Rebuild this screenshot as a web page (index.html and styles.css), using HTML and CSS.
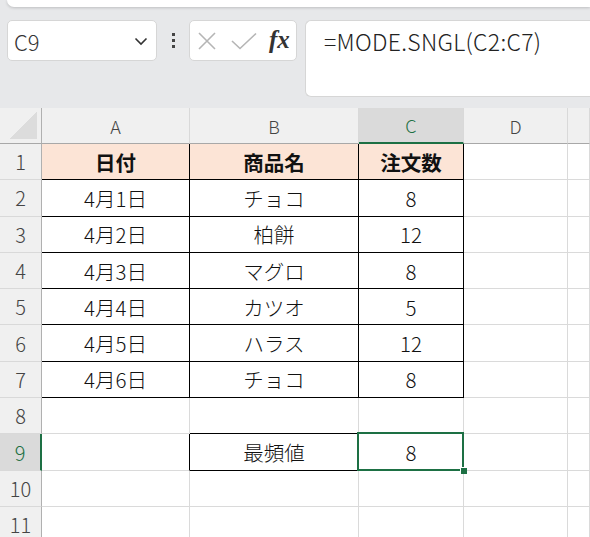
FILE: index.html
```html
<!DOCTYPE html>
<html lang="ja">
<head>
<meta charset="utf-8">
<link rel="stylesheet" href="styles.css">
</head>
<body>
<div class="top">
  <div class="ribbon"></div>
  <div class="fbar">
    <div class="namebox">
      <span class="ref">C9</span>
      <svg class="chev" width="14" height="9" viewBox="0 0 14 9"><path d="M1.5 1.5 L7 7 L12.5 1.5" fill="none" stroke="#333" stroke-width="1.6"/></svg>
    </div>
    <div class="dots"><i></i><i></i><i></i></div>
    <div class="fbtns">
      <svg width="20" height="20" viewBox="0 0 20 20"><path d="M2 2 L18 18 M18 2 L2 18" stroke="#b5b5b5" stroke-width="1.6" fill="none"/></svg>
      <svg width="26" height="18" viewBox="0 0 26 18"><path d="M1 9 L9 16.5 L25 1.5" stroke="#b5b5b5" stroke-width="1.6" fill="none"/></svg>
      <span class="fx">fx</span>
    </div>
    <div class="formula">=MODE.SNGL(C2:C7)</div>
  </div>
</div>

<div class="sheet">
  <div class="ch corner"><div class="tri"></div></div>
  <div class="ch">A</div><div class="ch">B</div><div class="ch sel">C</div><div class="ch">D</div><div class="ch"></div>

  <div class="rh">1</div><div class="c b hd">日付</div><div class="c b hd">商品名</div><div class="c b hd">注文数</div><div class="c"></div><div class="c"></div>
  <div class="rh">2</div><div class="c b">4月1日</div><div class="c b">チョコ</div><div class="c b">8</div><div class="c"></div><div class="c"></div>
  <div class="rh">3</div><div class="c b">4月2日</div><div class="c b">柏餅</div><div class="c b">12</div><div class="c"></div><div class="c"></div>
  <div class="rh">4</div><div class="c b">4月3日</div><div class="c b">マグロ</div><div class="c b">8</div><div class="c"></div><div class="c"></div>
  <div class="rh">5</div><div class="c b">4月4日</div><div class="c b">カツオ</div><div class="c b">5</div><div class="c"></div><div class="c"></div>
  <div class="rh">6</div><div class="c b">4月5日</div><div class="c b">ハラス</div><div class="c b">12</div><div class="c"></div><div class="c"></div>
  <div class="rh">7</div><div class="c b">4月6日</div><div class="c b">チョコ</div><div class="c b">8</div><div class="c"></div><div class="c"></div>
  <div class="rh">8</div><div class="c"></div><div class="c bb"></div><div class="c bb"></div><div class="c"></div><div class="c"></div>
  <div class="rh sel">9</div><div class="c br"></div><div class="c b">最頻値</div><div class="c b active">8<span class="handle"></span></div><div class="c"></div><div class="c"></div>
  <div class="rh">10</div><div class="c"></div><div class="c"></div><div class="c"></div><div class="c"></div><div class="c"></div>
  <div class="rh">11</div><div class="c"></div><div class="c"></div><div class="c"></div><div class="c"></div><div class="c"></div>
</div>
</body>
</html>
```

FILE: styles.css
```css
* { box-sizing: border-box; }
html, body { margin: 0; padding: 0; }
body {
  width: 590px;
  height: 537px;
  overflow: hidden;
  background: #e7e8ea;
  font-family: "Noto Sans CJK JP", "Noto Sans", sans-serif;
  color: #222;
}
.top {
  height: 108px;
  overflow: hidden;
}
.ribbon {
  height: 7px;
  margin-left: 7px;
  background: #fff;
  border-radius: 0 0 0 8px;
  box-shadow: 0 1px 3px rgba(0,0,0,0.18);
}
.fbar {
  display: flex;
  align-items: flex-start;
  margin-top: 13px;
  padding-left: 7px;
}
.namebox {
  width: 150px;
  height: 41px;
  background: #fff;
  border: 1px solid #d6d6d6;
  border-radius: 5px;
  display: flex;
  align-items: center;
  justify-content: space-between;
  padding: 0 8px 0 6px;
}
.ref {
  font-size: 22px;
  font-weight: 300;
  color: #333;
  line-height: 1;
}
.chev { margin-top: 1px; }
.dots {
  width: 32px;
  height: 41px;
  display: flex;
  flex-direction: column;
  align-items: center;
  justify-content: center;
  gap: 3px;
}
.dots i {
  display: block;
  width: 3px;
  height: 3px;
  background: #444;
}
.fbtns {
  width: 108px;
  height: 41px;
  background: #fff;
  border: 1px solid #d6d6d6;
  border-radius: 5px;
  display: flex;
  align-items: center;
  padding-left: 7px;
  gap: 11px;
}
.fbtns svg:nth-child(2) { margin-left: 3px; }
.fx {
  font-family: "Liberation Serif", "DejaVu Serif", serif;
  font-style: italic;
  font-weight: bold;
  font-size: 25px;
  color: #333;
  line-height: 1;
  margin-left: 1px;
  margin-top: -2px;
}
.formula {
  margin-left: 8px;
  flex: 1;
  height: 77px;
  background: #fff;
  border: 1px solid #d6d6d6;
  border-right: none;
  border-radius: 6px 0 0 6px;
  padding: 5px 0 0 18px;
  font-size: 23px;
  font-weight: 300;
  letter-spacing: 0.3px;
  color: #222;
  line-height: 30px;
  white-space: nowrap;
}

.sheet {
  display: grid;
  grid-template-columns: 42px 148px 169px 105px 104px 1fr;
  grid-template-rows: 36px repeat(11, 36.3px);
  background: #fff;
}
.ch {
  background: #f0f0f0;
  border-right: 1px solid #d9d9d9;
  border-bottom: 1px solid #a8a8a8;
  display: flex;
  align-items: center;
  justify-content: center;
  font-size: 18px;
  font-weight: 300;
  color: #444;
}
.ch.corner {
  border-right: 1px solid #b0b0b0;
  position: relative;
}
.tri {
  position: absolute;
  right: 4px;
  bottom: 4px;
  width: 28px;
  height: 28px;
  background: linear-gradient(to bottom right, transparent 50%, #dcdcdc 50%);
}
.ch.sel {
  background: #dadada;
  color: #1d7044;
  border-bottom: 2px solid #1d7044;
}
.rh {
  background: #f0f0f0;
  border-right: 1px solid #b0b0b0;
  border-bottom: 1px solid #d9d9d9;
  display: flex;
  align-items: center;
  justify-content: center;
  font-size: 20px;
  font-weight: 300;
  color: #444;
}
.rh.sel {
  background: #dadada;
  color: #1d7044;
  border-right: 2px solid #1d7044;
}
.c {
  border-right: 1px solid #dadada;
  border-bottom: 1px solid #dadada;
  display: flex;
  align-items: center;
  justify-content: center;
  font-size: 20.5px;
  font-weight: 300;
  color: #111;
  position: relative;
}
.c.b { border-right-color: #000; border-bottom-color: #000; }
.c.bb { border-bottom-color: #000; }
.c.br { border-right-color: #000; }
.c.hd {
  background: #fce4d6;
  font-weight: bold;
}
.c.active::after {
  content: "";
  position: absolute;
  left: -2px;
  top: -2px;
  right: -1px;
  bottom: -1px;
  border: 2px solid #1d7044;
}
.handle {
  position: absolute;
  right: -4px;
  bottom: -4px;
  width: 7px;
  height: 7px;
  background: #1d7044;
  border-top: 1px solid #fff;
  border-left: 1px solid #fff;
  z-index: 2;
}
```
